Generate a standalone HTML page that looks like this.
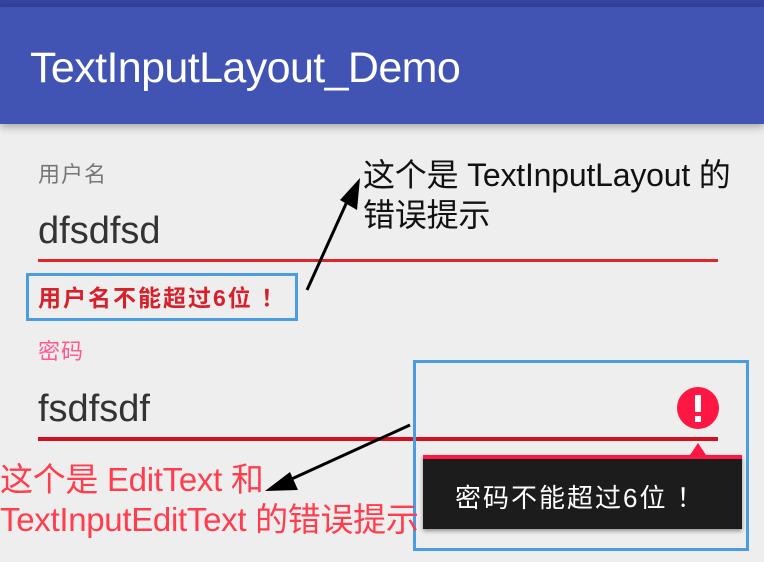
<!DOCTYPE html>
<html><head><meta charset="utf-8"><style>
*{margin:0;padding:0;box-sizing:border-box}
body{width:764px;height:562px;overflow:hidden;background:#eeeeee;position:relative;font-family:"Liberation Sans","Noto Sans CJK SC",sans-serif}
.a{position:absolute;white-space:nowrap}
</style></head><body>
<div class="a" style="left:0;top:0;width:764px;height:7px;background:#3444a0"></div>
<div class="a" style="left:0;top:7px;width:764px;height:117px;background:#4154b3;box-shadow:0 3px 8px rgba(0,0,0,.3)"></div>
<div class="a" style="left:30px;top:44px;font-size:43px;color:#fff;line-height:48px;letter-spacing:-0.6px">TextInputLayout_Demo</div>

<div class="a" style="left:38px;top:162px;font-size:22px;color:#777;line-height:26px;letter-spacing:1px">用户名</div>
<div class="a" style="left:363px;top:155px;font-size:32px;color:#111;line-height:40px;letter-spacing:-0.2px">这个是 TextInputLayout 的<br>错误提示</div>
<div class="a" style="left:38px;top:208px;font-size:38px;color:#333;line-height:46px">dfsdfsd</div>
<div class="a" style="left:38px;top:259px;width:680px;height:3px;background:#e0242c"></div>
<div class="a" style="left:26px;top:273px;width:272px;height:48px;border:3px solid #4a9de0"></div>
<div class="a" style="left:38px;top:283px;font-size:23px;font-weight:bold;color:#d8202a;line-height:30px;letter-spacing:2px">用户名不能超过6位 ！</div>

<div class="a" style="left:38px;top:339px;font-size:22px;color:#ff5a8c;line-height:26px;letter-spacing:1px">密码</div>
<div class="a" style="left:38px;top:386px;font-size:38px;color:#333;line-height:46px">fsdfsdf</div>
<div class="a" style="left:38px;top:437px;width:680px;height:4px;background:#d41020"></div>

<div class="a" style="left:413px;top:360px;width:336px;height:191px;border:3px solid #4a9de0"></div>
<svg class="a" style="left:0;top:0" width="764" height="562">
<line x1="307" y1="290" x2="350" y2="195" stroke="#000" stroke-width="3"/>
<polygon points="360,178 357,210 340,200" fill="#000"/>
<line x1="410" y1="425" x2="285" y2="482" stroke="#000" stroke-width="3"/>
<polygon points="265,491 290,472 298,490" fill="#000"/>
<circle cx="698" cy="408" r="21" fill="#ff1744"/>
<rect x="695" y="395" width="6" height="17" rx="1" fill="#fff"/>
<rect x="695" y="416" width="6" height="6" fill="#fff"/>
<polygon points="698,443 690,455 706,455" fill="#ff1744"/>
</svg>
<div class="a" style="left:423px;top:455px;width:319px;height:74px;background:#1c1c1c;border-top:4px solid #ff1744;box-shadow:0 2px 4px rgba(0,0,0,.4)"></div>
<div class="a" style="left:455px;top:481px;font-size:26px;color:#fff;line-height:34px;letter-spacing:2px">密码不能超过6位 ！</div>
<div class="a" style="left:0;top:460px;font-size:33px;color:#ff3d4d;line-height:40px;letter-spacing:-0.3px">这个是 EditText 和<br>TextInputEditText 的错误提示</div>
</body></html>
